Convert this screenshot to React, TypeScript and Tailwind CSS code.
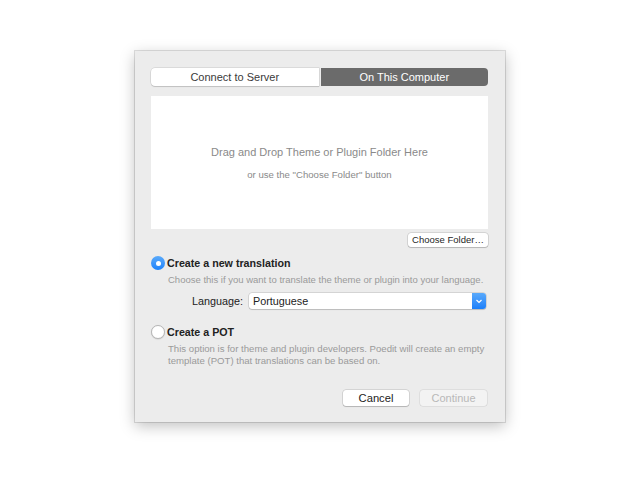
import React from "react";

function Radio({ checked }: { checked: boolean }) {
  return checked ? (
    <span className="flex h-[14px] w-[14px] shrink-0 items-center justify-center rounded-full bg-gradient-to-b from-[#5aaafa] to-[#1a82fb]">
      <span className="h-[5px] w-[5px] rounded-full bg-white" />
    </span>
  ) : (
    <span className="h-[14px] w-[14px] shrink-0 rounded-full border border-[#b5b5b5] bg-white shadow-[0_0.5px_1px_rgba(0,0,0,0.15)]" />
  );
}

export default function App() {
  return (
    <div
      className="h-[480px] w-[640px] bg-white pl-[135px] pt-[51px]"
      style={{ fontFamily: "'Liberation Sans', Arial, sans-serif" }}
    >
      <div className="flex w-[370px] flex-col bg-[#ececec] pb-[16px] pl-[16px] pr-[17px] pt-[17px] shadow-[0_0_0_1px_rgba(0,0,0,0.12),0_4px_14px_rgba(0,0,0,0.25)]">
        {/* segmented control */}
        <div className="flex h-[18px] shrink-0 gap-[2px]">
          <div className="flex flex-1 items-center justify-center whitespace-nowrap rounded-l-[4px] bg-white text-[11px] text-[#3a3a3a] shadow-[0_0_0_0.5px_rgba(0,0,0,0.15),0_1px_1px_rgba(0,0,0,0.12)]">
            Connect to Server
          </div>
          <div className="flex flex-1 items-center justify-center whitespace-nowrap rounded-r-[4px] bg-[#6b6b6b] text-[11px] text-white">
            On This Computer
          </div>
        </div>

        {/* drop area */}
        <div className="mt-[10px] flex h-[133px] shrink-0 flex-col items-center justify-center bg-white">
          <div className="whitespace-nowrap text-[11px] leading-[14px] text-[#8a8a8a]">Drag and Drop Theme or Plugin Folder Here</div>
          <div className="mt-[10px] whitespace-nowrap text-[9.6px] leading-[12px] text-[#8a8a8a]">or use the "Choose Folder" button</div>
        </div>

        <div className="mt-[4px] flex justify-end">
          <div className="flex h-[14px] w-[80px] items-center justify-center whitespace-nowrap rounded-[3px] bg-white text-[9.5px] text-[#262626] shadow-[0_0_0_0.5px_rgba(0,0,0,0.2),0_1px_1px_rgba(0,0,0,0.15)]">
            Choose Folder…
          </div>
        </div>

        {/* new translation */}
        <div className="mt-[9px] flex h-[14px] items-center gap-[2px]">
          <Radio checked />
          <span className="whitespace-nowrap text-[10.7px] font-bold text-[#222]">Create a new translation</span>
        </div>
        <div className="ml-[17px] mt-[4px] h-[12px] whitespace-nowrap text-[9.5px] leading-[12px] text-[#9a9a9a]">
          Choose this if you want to translate the theme or plugin into your language.
        </div>
        <div className="mt-[7px] flex h-[16px] items-center">
          <span className="ml-[41px] w-[57px] whitespace-nowrap text-[10.8px] text-[#222]">Language:</span>
          <div className="flex h-[16px] w-[237px] items-center rounded-[3px] bg-white shadow-[0_0_0_0.5px_rgba(0,0,0,0.2),0_1px_1px_rgba(0,0,0,0.12)]">
            <span className="flex-1 whitespace-nowrap pl-[4px] text-[10.8px] text-[#222]">Portuguese</span>
            <span className="flex h-[16px] w-[14px] items-center justify-center rounded-r-[3px] bg-gradient-to-b from-[#59a9fb] to-[#1a7ffa]">
              <svg width="8" height="5" viewBox="0 0 8 5">
                <path d="M1.5 1 L4 3.5 L6.5 1" fill="none" stroke="white" strokeWidth="1.2" />
              </svg>
            </span>
          </div>
        </div>

        {/* POT */}
        <div className="mt-[16px] flex h-[14px] items-center gap-[2px]">
          <Radio checked={false} />
          <span className="whitespace-nowrap text-[10.7px] font-bold text-[#222]">Create a POT</span>
        </div>
        <div className="ml-[17px] mt-[4px] whitespace-nowrap text-[9.6px] leading-[12px] text-[#9a9a9a]">
          This option is for theme and plugin developers. Poedit will create an empty
          <br />
          template (POT) that translations can be based on.
        </div>

        {/* buttons */}
        <div className="mt-[23px] flex justify-end gap-[11px] pr-[1px]">
          <div className="flex h-[16px] w-[66px] items-center justify-center rounded-[3px] bg-white text-[11.2px] text-[#222] shadow-[0_0_0_0.5px_rgba(0,0,0,0.2),0_1px_1px_rgba(0,0,0,0.15)]">
            Cancel
          </div>
          <div className="flex h-[16px] w-[67px] items-center justify-center rounded-[3px] bg-[#f3f3f3] text-[11px] text-[#b8b8b8] shadow-[0_0_0_0.5px_rgba(0,0,0,0.12)]">
            Continue
          </div>
        </div>
      </div>
    </div>
  );
}
